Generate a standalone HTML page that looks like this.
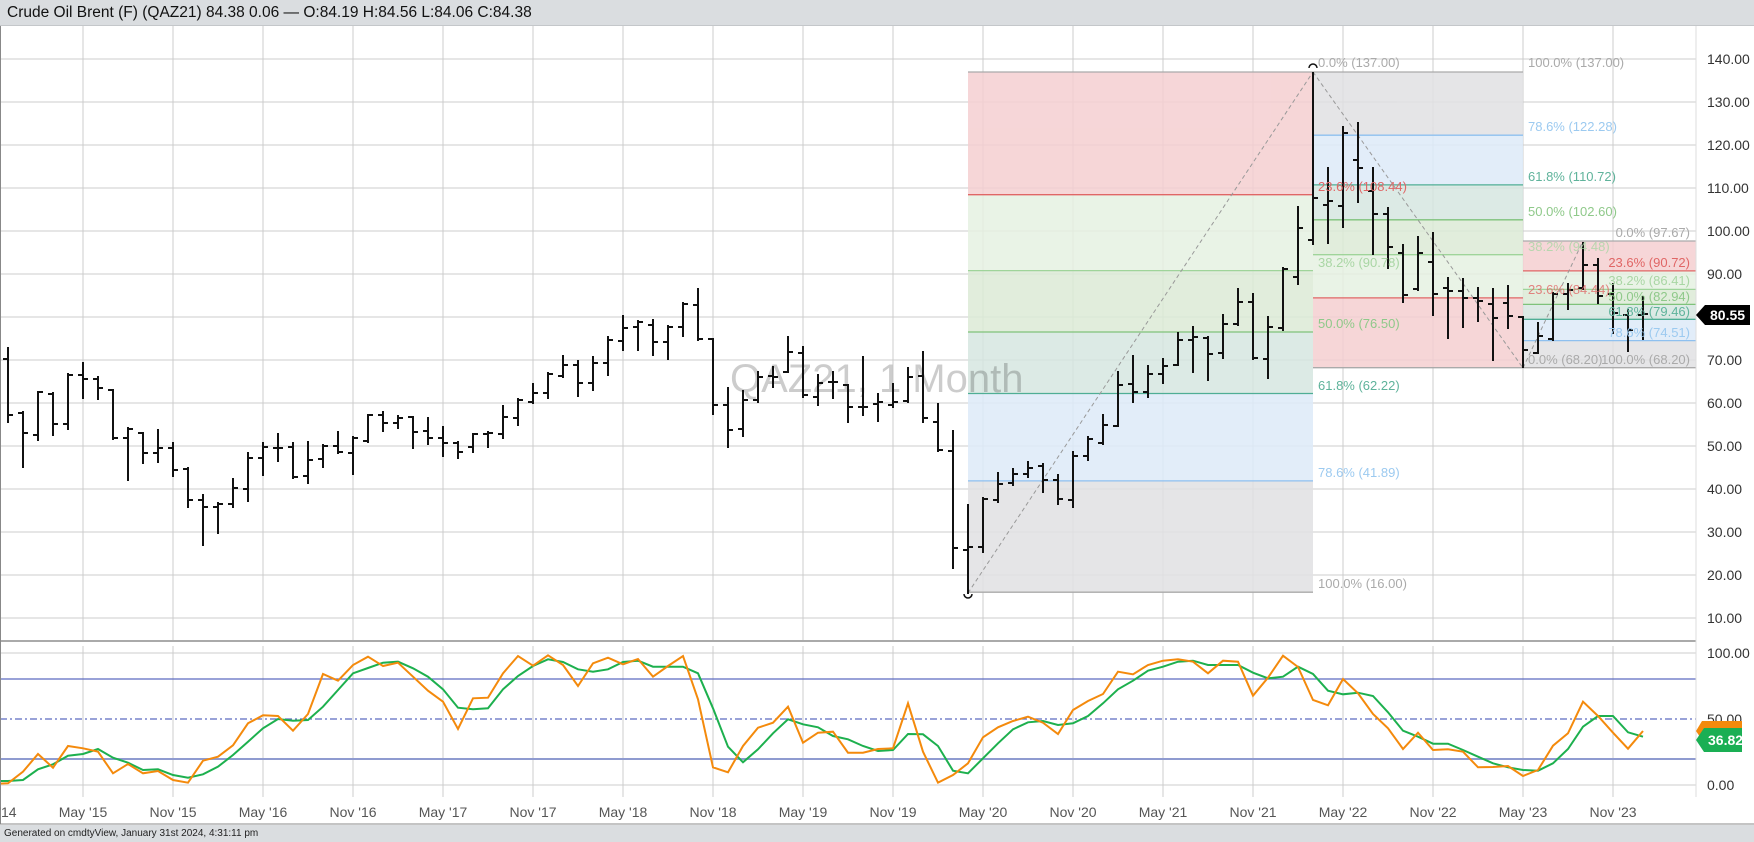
<!DOCTYPE html>
<html><head><meta charset="utf-8"><style>
html,body{margin:0;padding:0;background:#fff;width:1754px;height:842px;overflow:hidden;font-family:"Liberation Sans",sans-serif}
#hdr{position:absolute;left:0;top:0;width:1754px;height:26px;background:#dadde0;border-bottom:1px solid #c4c7ca;font-size:15.5px;color:#111;line-height:26px;padding-left:7px;box-sizing:border-box}
#ftr{position:absolute;left:0;top:825px;width:1754px;height:17px;background:#dadde0;font-size:10px;color:#222;line-height:17px;padding-left:4px;box-sizing:border-box}
svg{position:absolute;left:0;top:0}
</style></head><body>
<div id="hdr">Crude Oil Brent (F) (QAZ21) 84.38 0.06 — O:84.19 H:84.56 L:84.06 C:84.38</div>
<svg width="1754" height="842" id="s" font-family="Liberation Sans, sans-serif">
<g id="grid" stroke="#e6e6e6" stroke-width="2">
<line x1="0" x2="1696" y1="59" y2="59"/><line x1="0" x2="1696" y1="102" y2="102"/><line x1="0" x2="1696" y1="145" y2="145"/><line x1="0" x2="1696" y1="188" y2="188"/><line x1="0" x2="1696" y1="231" y2="231"/><line x1="0" x2="1696" y1="274" y2="274"/><line x1="0" x2="1696" y1="317" y2="317"/><line x1="0" x2="1696" y1="360" y2="360"/><line x1="0" x2="1696" y1="403" y2="403"/><line x1="0" x2="1696" y1="446" y2="446"/><line x1="0" x2="1696" y1="489" y2="489"/><line x1="0" x2="1696" y1="532" y2="532"/><line x1="0" x2="1696" y1="575" y2="575"/><line x1="0" x2="1696" y1="618" y2="618"/>
<line x1="0" x2="1696" y1="653" y2="653"/><line x1="0" x2="1696" y1="785" y2="785"/>
</g>
<g id="vg" stroke="#cccccc" stroke-width="1"></g>
<g opacity="0.85">
<rect x="968" y="72" width="345" height="122.7" fill="#f5cfd1"/>
<rect x="968" y="194.7" width="345" height="75.9" fill="#e6f1e2"/>
<rect x="968" y="270.6" width="345" height="61.4" fill="#dcebd7"/>
<rect x="968" y="332" width="345" height="61.5" fill="#d6e7e1"/>
<rect x="968" y="393.5" width="345" height="87.4" fill="#deebf9"/>
<rect x="968" y="480.9" width="345" height="111.3" fill="#e1e1e3"/>
<rect x="1313" y="72" width="210" height="63.2" fill="#e1e1e3"/>
<rect x="1313" y="135.2" width="210" height="49.7" fill="#deebf9"/>
<rect x="1313" y="184.9" width="210" height="34.9" fill="#d6e7e1"/>
<rect x="1313" y="219.8" width="210" height="34.9" fill="#dcebd7"/>
<rect x="1313" y="254.7" width="210" height="43.2" fill="#e6f1e2"/>
<rect x="1313" y="297.9" width="210" height="69.8" fill="#f5cfd1"/>
<rect x="1523" y="241" width="173" height="29.9" fill="#f5cfd1"/>
<rect x="1523" y="270.9" width="173" height="18.5" fill="#e6f1e2"/>
<rect x="1523" y="289.4" width="173" height="15" fill="#dcebd7"/>
<rect x="1523" y="304.4" width="173" height="14.9" fill="#d6e7e1"/>
<rect x="1523" y="319.3" width="173" height="21.3" fill="#deebf9"/>
<rect x="1523" y="340.6" width="173" height="27.1" fill="#e1e1e3"/>
</g>
<g stroke-width="1.3">
<line x1="968" x2="1313" y1="72" y2="72" stroke="#aaa"/>
<line x1="968" x2="1313" y1="194.7" y2="194.7" stroke="#e06666"/>
<line x1="968" x2="1313" y1="270.6" y2="270.6" stroke="#9fd49a"/>
<line x1="968" x2="1313" y1="332" y2="332" stroke="#7fc27a"/>
<line x1="968" x2="1313" y1="393.5" y2="393.5" stroke="#4fae95"/>
<line x1="968" x2="1313" y1="480.9" y2="480.9" stroke="#8ec0ef"/>
<line x1="968" x2="1313" y1="592.2" y2="592.2" stroke="#aaa"/>
<line x1="1313" x2="1523" y1="72" y2="72" stroke="#aaa"/>
<line x1="1313" x2="1523" y1="135.2" y2="135.2" stroke="#8ec0ef"/>
<line x1="1313" x2="1523" y1="184.9" y2="184.9" stroke="#4fae95"/>
<line x1="1313" x2="1523" y1="219.8" y2="219.8" stroke="#7fc27a"/>
<line x1="1313" x2="1523" y1="254.7" y2="254.7" stroke="#9fd49a"/>
<line x1="1313" x2="1523" y1="297.9" y2="297.9" stroke="#e06666"/>
<line x1="1313" x2="1523" y1="367.7" y2="367.7" stroke="#aaa"/>
<line x1="1523" x2="1696" y1="241" y2="241" stroke="#aaa"/>
<line x1="1523" x2="1696" y1="270.9" y2="270.9" stroke="#e06666"/>
<line x1="1523" x2="1696" y1="289.4" y2="289.4" stroke="#9fd49a"/>
<line x1="1523" x2="1696" y1="304.4" y2="304.4" stroke="#7fc27a"/>
<line x1="1523" x2="1696" y1="319.3" y2="319.3" stroke="#4fae95"/>
<line x1="1523" x2="1696" y1="340.6" y2="340.6" stroke="#8ec0ef"/>
<line x1="1523" x2="1696" y1="367.7" y2="367.7" stroke="#aaa"/>
</g>
<g stroke="#999" stroke-width="1" stroke-dasharray="4,3" fill="none">
<line x1="968" y1="593" x2="1313" y2="72"/><line x1="1313" y1="72" x2="1523" y2="368"/><line x1="1523" y1="368" x2="1583" y2="241"/>
</g>
<text x="730" y="392" font-size="40" fill="#000" fill-opacity="0.2">QAZ21, 1 Month</text>
<g id="bars" stroke="#111" stroke-width="2" fill="none"></g>
<path d="M1309,68 A4,4 0 0 1 1317,68" stroke="#111" stroke-width="1.5" fill="none"/>
<path d="M964,594 A4,4 0 0 0 972,594" stroke="#111" stroke-width="1.5" fill="none"/>
<g font-size="13">
<text x="1318" y="67" fill="#aaa">0.0% (137.00)</text>
<text x="1318" y="191" fill="#e06666">23.6% (108.44)</text>
<text x="1318" y="267" fill="#a9d6a4">38.2% (90.78)</text>
<text x="1318" y="328" fill="#8fc98a">50.0% (76.50)</text>
<text x="1318" y="390" fill="#5fb39b">61.8% (62.22)</text>
<text x="1318" y="477" fill="#9ccaf0">78.6% (41.89)</text>
<text x="1318" y="588" fill="#aaa">100.0% (16.00)</text>
<text x="1528" y="67" fill="#aaa">100.0% (137.00)</text>
<text x="1528" y="131" fill="#9ccaf0">78.6% (122.28)</text>
<text x="1528" y="181" fill="#5fb39b">61.8% (110.72)</text>
<text x="1528" y="216" fill="#8fc98a">50.0% (102.60)</text>
<text x="1528" y="251" fill="#a9d6a4" fill-opacity="0.8">38.2% (94.48)</text>
<text x="1528" y="294" fill="#e06666" fill-opacity="0.8">23.6% (84.44)</text>
<text x="1528" y="364" fill="#aaa">0.0% (68.20)</text>
<g text-anchor="end">
<text x="1690" y="237" fill="#aaa">0.0% (97.67)</text>
<text x="1690" y="267" fill="#e06666">23.6% (90.72)</text>
<text x="1690" y="285" fill="#a9d6a4">38.2% (86.41)</text>
<text x="1690" y="301" fill="#8fc98a">50.0% (82.94)</text>
<text x="1690" y="316" fill="#5fb39b">61.8% (79.46)</text>
<text x="1690" y="337" fill="#9ccaf0">78.6% (74.51)</text>
<text x="1690" y="364" fill="#aaa">100.0% (68.20)</text>
</g></g>
<line x1="0" x2="1696" y1="641" y2="641" stroke="#aaa" stroke-width="2"/>
<line x1="0" x2="1696" y1="679" y2="679" stroke="#5c6bc0" stroke-width="1.2"/>
<line x1="0" x2="1696" y1="759" y2="759" stroke="#8f9bd0" stroke-width="2"/>
<line x1="0" x2="1696" y1="719" y2="719" stroke="#5c6bc0" stroke-width="1.2" stroke-dasharray="7,3,2,3"/>
<polyline id="gr" fill="none" stroke="#1db04e" stroke-width="2"/>
<polyline id="or" fill="none" stroke="#f48a0c" stroke-width="2"/>
<line x1="1696" x2="1696" y1="26" y2="797" stroke="#ddd" stroke-width="1"/>
<line x1="0.5" x2="0.5" y1="26" y2="824" stroke="#888" stroke-width="1"/>
<line x1="0" x2="1754" y1="824" y2="824" stroke="#888" stroke-width="1"/>
<g font-size="14" fill="#333">
<text x="1707" y="64">140.00</text><text x="1707" y="107">130.00</text><text x="1707" y="150">120.00</text><text x="1707" y="193">110.00</text><text x="1707" y="236">100.00</text><text x="1707" y="279">90.00</text><text x="1707" y="365">70.00</text><text x="1707" y="408">60.00</text><text x="1707" y="451">50.00</text><text x="1707" y="494">40.00</text><text x="1707" y="537">30.00</text><text x="1707" y="580">20.00</text><text x="1707" y="623">10.00</text>
<text x="1707" y="658">100.00</text><text x="1707" y="724">50.00</text><text x="1707" y="790">0.00</text>
</g>
<path d="M1696,315 L1705,305 L1750,305 L1750,325 L1705,325 Z" fill="#000"/>
<text x="1710" y="320" font-size="14" font-weight="bold" fill="#fff">80.55</text>
<path d="M1696,731 L1702,721 L1742,721 L1742,740 L1702,740 Z" fill="#f48a0c"/>
<path d="M1696,740 L1704,728 L1742,728 L1742,752 L1704,752 Z" fill="#1aaf54"/>
<text x="1708" y="745" font-size="14" font-weight="bold" fill="#fff">36.82</text>
<g font-size="14" fill="#555" text-anchor="middle" id="tl">
<text x="-7" y="817">Nov '14</text><text x="83" y="817">May '15</text><text x="173" y="817">Nov '15</text><text x="263" y="817">May '16</text><text x="353" y="817">Nov '16</text><text x="443" y="817">May '17</text><text x="533" y="817">Nov '17</text><text x="623" y="817">May '18</text><text x="713" y="817">Nov '18</text><text x="803" y="817">May '19</text><text x="893" y="817">Nov '19</text><text x="983" y="817">May '20</text><text x="1073" y="817">Nov '20</text><text x="1163" y="817">May '21</text><text x="1253" y="817">Nov '21</text><text x="1343" y="817">May '22</text><text x="1433" y="817">Nov '22</text><text x="1523" y="817">May '23</text><text x="1613" y="817">Nov '23</text>
</g>
</svg>
<div id="ftr">Generated on cmdtyView, January 31st 2024, 4:31:11 pm</div>
<script>
var B=[[359,348,422,415],[413,412,467,433],[435,392,440,392],[394,393,435,424],[424,374,429,375],[375,363,398,379],[379,377,399,388],[390,390,439,438],[438,428,480,429],[433,433,463,453],[453,430,462,448],[448,443,476,470],[469,468,507,500],[500,495,545,507],[507,503,533,504],[504,479,507,488],[489,453,501,458],[458,443,475,447],[448,434,461,448],[447,443,478,477],[476,442,483,460],[459,445,467,446],[446,432,453,452],[453,437,474,438],[441,415,442,415],[415,412,431,423],[423,416,428,418],[417,417,448,432],[431,418,444,438],[438,427,456,443],[443,442,458,452],[447,434,452,434],[434,432,447,433],[434,406,438,417],[418,399,425,400],[402,384,403,393],[393,373,398,374],[376,356,377,365],[365,361,396,383],[383,357,390,363],[363,337,375,340],[341,316,350,328],[327,321,350,322],[325,320,355,342],[342,326,359,327],[327,303,336,304],[305,289,340,339],[339,339,414,405],[405,388,447,430],[429,391,436,400],[400,372,402,377],[376,367,387,377],[372,337,372,352],[353,347,397,395],[397,375,405,383],[382,372,398,382],[385,385,422,407],[407,357,415,407],[404,394,421,402],[405,384,407,402],[401,368,402,377],[376,352,422,418],[422,404,451,450],[451,431,568,548],[550,505,593,547],[547,498,552,499],[500,473,502,484],[483,469,485,474],[474,462,477,468],[466,464,492,480],[480,475,504,499],[500,452,507,456],[456,437,460,439],[443,415,444,425],[426,372,426,385],[384,356,402,392],[392,366,397,374],[374,359,383,366],[365,333,365,340],[340,327,372,337],[338,337,380,354],[353,315,358,324],[324,289,325,302],[302,294,359,358],[359,317,378,327],[328,268,330,269],[277,207,284,228],[240,73,244,198],[205,168,243,201],[206,127,227,133],[160,123,202,168],[191,168,254,214],[214,208,268,247],[253,245,302,295],[289,237,290,253],[262,233,315,294],[288,278,338,291],[291,279,327,298],[298,288,321,301],[304,289,360,318],[303,286,328,316],[317,317,367,350],[353,323,353,336],[339,293,340,294],[294,284,309,290],[288,243,289,265],[265,259,303,296],[294,284,333,313],[315,310,351,330],[315,297,339,314]];
var d="";B.forEach(function(b,k){var x=8+15*k;d+="M"+x+","+(b[1]-1)+"V"+(b[2]+1)+"M"+(x-5)+","+b[0]+"H"+x+"M"+x+","+b[3]+"H"+(x+5);});
var ns="http://www.w3.org/2000/svg";var p=document.createElementNS(ns,"path");p.setAttribute("d",d);document.getElementById("bars").appendChild(p);
var O=[784,783.3,771.7,754,767.7,746,748.3,751.7,773.3,764,773.3,771,780,782.7,760.7,756.7,745.3,723.3,715.3,716,730.7,714,674,680.7,665,656.7,666,662.7,676.7,690.7,701.7,729,698.3,697.7,673.3,656,665.7,655.3,665,686,663.3,657.7,664.3,659,676.7,666,656,699.3,767.3,772.3,746,727.7,722.7,706.7,742.7,732.7,731.7,752.7,752.7,749,748.3,703.3,751.7,782.7,775,763.3,737.3,727.3,721,716.7,722.7,734,710,701,694,671.7,674.3,665,660.7,659.3,661.7,673.3,660.7,661.7,695.7,677.7,655.7,667,700,705.3,679,693.3,714,728.3,749,732.7,750,749.3,751.7,767.3,767,766,776,770,745.7,733.3,701.7,716,732.7,748.7,731];
var G=[781,781,780,769.3,764.3,755.7,754,749,757.7,762.7,770,769.3,775,777.7,774.3,766.7,755,741.7,728.3,719,720.7,720,706.7,690,673.3,668,662.7,661.7,668.3,676.7,689.3,707.7,709.3,708.3,689.3,676,666,659.3,662,669.3,671.7,669.3,662,660.7,666.7,666.7,666.7,673.3,708.3,746.7,762.3,749.3,733.3,719.3,724.3,727.3,736,739.3,746,751,750,734,734.3,746,770.7,773.3,758.3,743.3,729.3,722.3,721,725,723.3,716,703.3,689.3,680.7,670.7,666.7,661.7,660.7,665,665,665,672.7,678.3,676.7,666.7,674,690.7,694.3,692.7,696,712.3,730.7,736.7,743.7,743.7,750,756.7,763.3,767.3,770,770.7,763.3,749,726.7,716,716,732.3,736.7];
function pts(a){return a.map(function(y,i){return (8+15*(i-1))+","+y}).join(" ")}
document.getElementById("or").setAttribute("points",pts(O));
document.getElementById("gr").setAttribute("points",pts(G));
var vg=document.getElementById("vg");for(var x=-7;x<1696;x+=90){[[26,640],[646,797]].forEach(function(r){var l=document.createElementNS(ns,"line");l.setAttribute("x1",x);l.setAttribute("x2",x);l.setAttribute("y1",r[0]);l.setAttribute("y2",r[1]);vg.appendChild(l);});}
</script>
</body></html>
